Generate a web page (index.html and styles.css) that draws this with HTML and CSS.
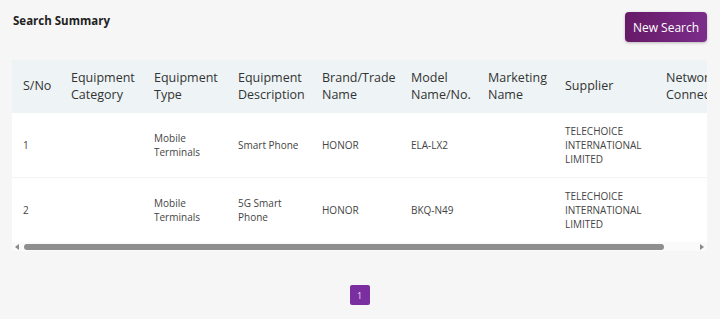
FILE: index.html
```html
<!DOCTYPE html>
<html lang="en">
<head>
    <meta charset="utf-8">
    <title>Search Summary</title>
    <link rel="stylesheet" href="styles.css">
</head>
<body>
    <div class="page">
        <div class="summary-head">
            <h2>Search Summary</h2>
            <button class="btn-new">New Search</button>
        </div>

        <div class="table-wrap">
            <div class="table-scroll">
                <table class="results">
                    <colgroup>
                        <col style="width: 48px">
                        <col style="width: 83px">
                        <col style="width: 84px">
                        <col style="width: 84px">
                        <col style="width: 89px">
                        <col style="width: 77px">
                        <col style="width: 77px">
                        <col style="width: 101px">
                        <col style="width: 92px">
                    </colgroup>
                    <thead>
                        <tr>
                            <th>S/No</th>
                            <th>Equipment Category</th>
                            <th>Equipment Type</th>
                            <th>Equipment Description</th>
                            <th>Brand/Trade Name</th>
                            <th>Model Name/No.</th>
                            <th>Marketing Name</th>
                            <th>Supplier</th>
                            <th>Network Connectivity</th>
                        </tr>
                    </thead>
                    <tbody>
                        <tr>
                            <td>1</td>
                            <td></td>
                            <td>Mobile Terminals</td>
                            <td>Smart Phone</td>
                            <td>HONOR</td>
                            <td>ELA-LX2</td>
                            <td></td>
                            <td>TELECHOICE INTERNATIONAL LIMITED</td>
                            <td></td>
                        </tr>
                        <tr>
                            <td>2</td>
                            <td></td>
                            <td>Mobile Terminals</td>
                            <td>5G Smart Phone</td>
                            <td>HONOR</td>
                            <td>BKQ-N49</td>
                            <td></td>
                            <td>TELECHOICE INTERNATIONAL LIMITED</td>
                            <td></td>
                        </tr>
                    </tbody>
                </table>
            </div>
            <!-- horizontal scroll bar under the table -->
            <div class="hscroll">
                <span class="hscroll-arrow left"></span>
                <span class="hscroll-track"><span class="hscroll-thumb"></span></span>
                <span class="hscroll-arrow right"></span>
            </div>
        </div>

        <div class="pager">
            <span class="page-no active">1</span>
        </div>
    </div>
</body>
</html>
```

FILE: styles.css
```css
body {
    margin: 0;
    font-family: "Open Sans", Arial, sans-serif;
    background-color: #f6f6f6;
    color: #333;
}
.page {
    padding: 12px 13px 0 12px;
}
.summary-head {
    display: flex;
    justify-content: space-between;
    align-items: flex-start;
}
.summary-head h2 {
    margin: 1px 0 0 1px;
    font-size: 11.5px;
    font-weight: 700;
    color: #222;
}
.btn-new {
    width: 82px;
    height: 30px;
    border: none;
    border-radius: 4px;
    background: linear-gradient(90deg, #661a66, #7b2d8b);
    color: #fff;
    font-family: inherit;
    font-size: 12px;
    box-shadow: 0 1px 3px rgba(0, 0, 0, 0.25);
    cursor: pointer;
}

.table-wrap {
    margin-top: 18px;
    background: #fafafa;
}
.table-scroll {
    overflow: hidden;
}

table.results {
    table-layout: fixed;
    width: 735px;
    border-collapse: collapse;
}
.results th {
    background: #eef3f6;
    text-align: left;
    font-weight: 400;
    font-size: 12.5px;
    line-height: 16.5px;
    color: #333;
    padding: 10px 11px;
    height: 33px;
    vertical-align: middle;
}
.results td {
    background: #fff;
    font-size: 10px;
    line-height: 14px;
    color: #444;
    padding: 11px;
    height: 42px;
    vertical-align: middle;
    border-bottom: 1px solid #f3f3f3;
}
.results tbody tr:last-child td {
    border-bottom: none;
}

.hscroll {
    display: flex;
    align-items: center;
    height: 9px;
    padding: 0 3px;
    gap: 4px;
}
.hscroll-arrow {
    width: 0;
    height: 0;
    border-top: 3px solid transparent;
    border-bottom: 3px solid transparent;
}
.hscroll-arrow.left {
    border-right: 4px solid #8a8a8a;
}
.hscroll-arrow.right {
    border-left: 4px solid #8a8a8a;
}
.hscroll-track {
    flex: 1;
    height: 6px;
    margin: 0 3px 0 1px;
}
.hscroll-thumb {
    display: block;
    width: 95.7%;
    height: 100%;
    border-radius: 3px;
    background: #8e8e8e;
}

.pager {
    display: flex;
    justify-content: center;
    margin-top: 34px;
}
.page-no {
    width: 20px;
    height: 20px;
    border-radius: 2px;
    display: flex;
    align-items: center;
    justify-content: center;
    font-size: 9px;
    color: #f1dcf5;
}
.page-no.active {
    background: #7a2fa1;
}
```
